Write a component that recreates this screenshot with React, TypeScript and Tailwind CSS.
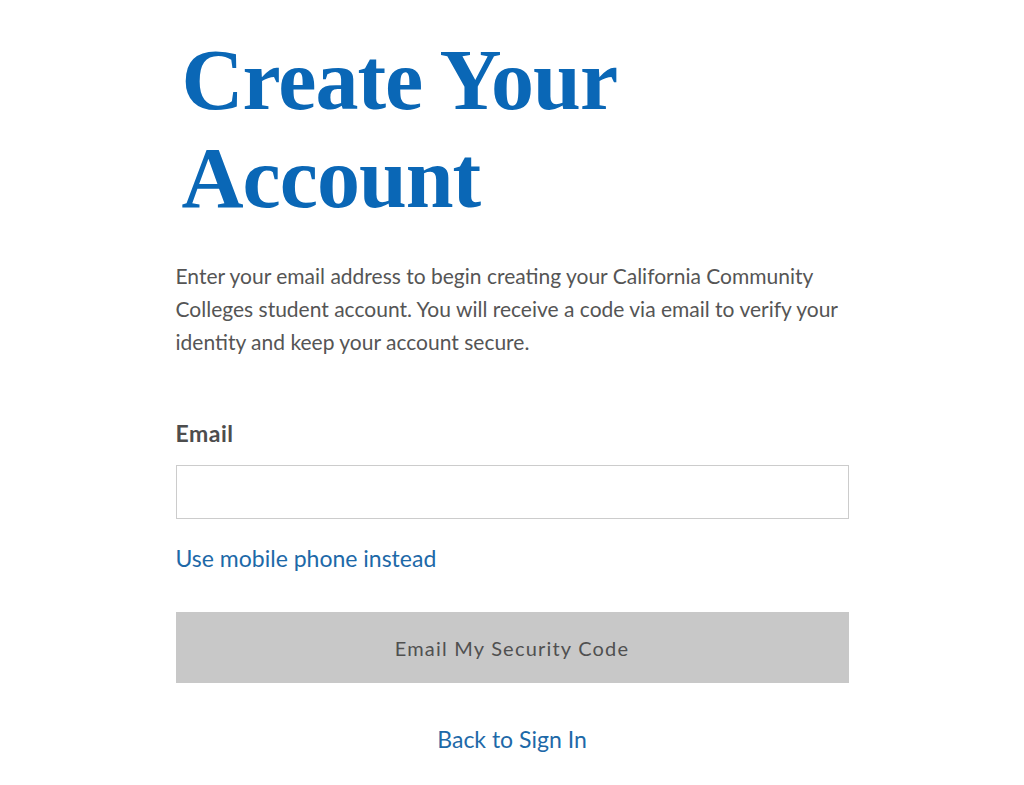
export default function App() {
  return (
    <div className="min-h-screen bg-white font-['Lato','Noto_Sans',sans-serif]">
      <div className="mx-auto w-[673px] pt-[31px]">
        <h1 className="pl-[6px] font-['Liberation_Serif',serif] text-[86px] font-bold leading-[98px] tracking-[-1px] text-[#0a67b6]">
          Create Your
          <br />
          Account
        </h1>

        <p className="mt-[32px] text-[21px] leading-[33px] text-[#555555]">
          Enter your email address to begin creating your California Community
          Colleges student account. You will receive a code via email to verify
          your identity and keep your account secure.
        </p>

        <form className="mt-[60px] flex flex-col" onSubmit={(e) => e.preventDefault()}>
          <label htmlFor="email" className="text-[23px] font-bold leading-[30px] tracking-[0.5px] text-[#4d4d4d]">
            Email
          </label>
          <input
            id="email"
            type="email"
            className="mt-[17px] h-[54px] w-full border border-[#cccccc] px-3 text-[19px] outline-none"
          />
          <a href="#" className="mt-[24px] self-start text-[23px] leading-[30px] text-[#1d69a8]">
            Use mobile phone instead
          </a>
          <button
            type="submit"
            disabled
            className="mt-[39px] h-[71px] w-full bg-[#c8c8c8] text-[20px] tracking-[1.2px] text-[#505050]"
          >
            Email My Security Code
          </button>
          <a href="#" className="mt-[41px] self-center text-[23px] leading-[30px] text-[#1d69a8]">
            Back to Sign In
          </a>
        </form>
      </div>
    </div>
  );
}
